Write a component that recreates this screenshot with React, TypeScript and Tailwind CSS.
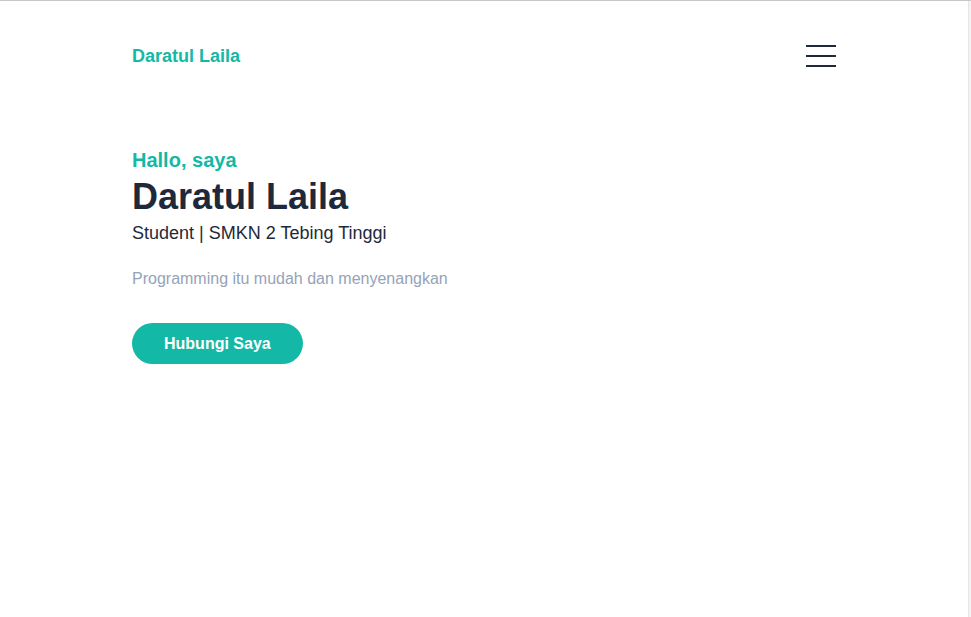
export default function App() {
  return (
    <div className="flex h-screen border-t border-[#c6c6c6] bg-white font-['Liberation_Sans',Arial,sans-serif]">
      <div className="flex-1">
        <div className="mx-auto max-w-[768px] px-8">
          <header className="flex h-[110px] items-center justify-between">
            <a href="#" className="text-lg font-bold leading-7 text-[#14b8a6]">
              Daratul Laila
            </a>
            <button aria-label="Menu" className="flex flex-col gap-2">
              <span className="block h-[2px] w-[30px] bg-[#1e293b]" />
              <span className="block h-[2px] w-[30px] bg-[#1e293b]" />
              <span className="block h-[2px] w-[30px] bg-[#1e293b]" />
            </button>
          </header>

          <section className="pt-[35px]">
            <h2 className="text-xl font-bold leading-7 text-[#14b8a6]">Hallo, saya</h2>
            <h1 className="mt-[3px] text-4xl font-bold leading-10 text-[#1e293b]">Daratul Laila</h1>
            <p className="mt-[2px] text-lg leading-7 text-[#1e293b]">Student | SMKN 2 Tebing Tinggi</p>
            <p className="mt-5 text-base leading-6 text-[#94a3b8]">Programming itu mudah dan menyenangkan</p>
            <a
              href="#"
              className="mt-8 inline-block rounded-full bg-[#14b8a6] px-8 py-[8.5px] text-base font-bold leading-6 text-white"
            >
              Hubungi Saya
            </a>
          </section>
        </div>
      </div>
      <div className="w-[3px] border-l border-[#e6e6e6] bg-[#f3f3f3]" />
    </div>
  )
}
